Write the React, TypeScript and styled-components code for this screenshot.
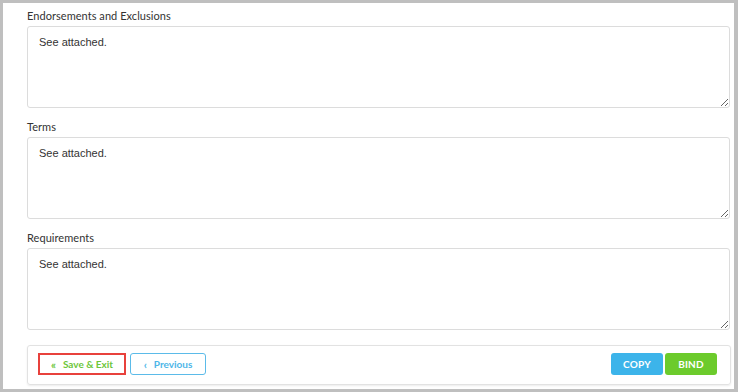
import React from 'react';
import styled, { createGlobalStyle } from 'styled-components';

const GlobalStyle = createGlobalStyle`
  html, body {
    margin: 0;
    padding: 0;
    background: #ffffff;
  }
  * {
    box-sizing: border-box;
  }
`;

type Field = {
  label: string;
  value: string;
};

const fields: Field[] = [
  { label: 'Endorsements and Exclusions', value: 'See attached.' },
  { label: 'Terms', value: 'See attached.' },
  { label: 'Requirements', value: 'See attached.' },
];

export default function App() {
  return (
    <>
      <GlobalStyle />
      <Frame>
        <Body>
          {fields.map((field) => (
            <Group key={field.label}>
              <Label>{field.label}</Label>
              <TextArea defaultValue={field.value} />
            </Group>
          ))}
          <Footer>
            <LeftActions>
              <SaveButton>
                <Chevron>«</Chevron>
                Save &amp; Exit
              </SaveButton>
              <PrevButton>
                <Chevron>‹</Chevron>
                Previous
              </PrevButton>
            </LeftActions>
            <RightActions>
              <SolidButton $color="#3cb4ea">COPY</SolidButton>
              <SolidButton $color="#6ccb2c">BIND</SolidButton>
            </RightActions>
          </Footer>
        </Body>
      </Frame>
    </>
  );
}

const Frame = styled.div`
  width: 738px;
  height: 392px;
  border: 3px solid #bfbfbf;
  border-right-width: 4px;
  background: #ffffff;
`;
const Body = styled.div`
  padding: 6px 1px 4px 24px;
  display: flex;
  flex-direction: column;
`;
const Group = styled.section`
  display: flex;
  flex-direction: column;
  margin-bottom: 12px;
`;
const Label = styled.label`
  font-family: Lato, 'Open Sans', sans-serif;
  font-size: 11px;
  line-height: 14px;
  letter-spacing: 0.05px;
  color: #333333;
  margin-bottom: 3px;
`;
const TextArea = styled.textarea`
  width: 703px;
  height: 82px;
  border: 1px solid #dcdcdc;
  border-radius: 3px;
  padding: 8px 11px;
  font-family: 'Liberation Sans', Arial, sans-serif;
  font-size: 11px;
  line-height: 14px;
  color: #333333;
  outline: none;
  margin: 0;
`;
const Footer = styled.footer`
  width: 704px;
  height: 40px;
  margin-top: 3px;
  border: 1px solid #e2e2e2;
  border-radius: 3px;
  box-shadow: 0 1px 2px rgba(0, 0, 0, 0.08);
  display: flex;
  align-items: center;
  justify-content: space-between;
  padding: 0 13px 2px 10px;
`;
const LeftActions = styled.div`
  display: flex;
  gap: 4px;
`;
const RightActions = styled.div`
  display: flex;
  gap: 2px;
`;
const BaseButton = styled.button`
  height: 22px;
  border-radius: 3px;
  font-family: Lato, 'Open Sans', sans-serif;
  font-weight: 700;
  font-size: 10px;
  display: flex;
  align-items: center;
  justify-content: center;
  padding: 0;
  cursor: pointer;
`;
const SaveButton = styled(BaseButton)`
  width: 88px;
  border: 2px solid #e8413c;
  border-radius: 0;
  background: #ffffff;
  color: #6cc63a;
`;
const PrevButton = styled(BaseButton)`
  width: 76px;
  border: 1px solid #5bbbe9;
  background: #ffffff;
  color: #4db6e8;
`;
const Chevron = styled.span`
  font-size: 11px;
  margin-right: 7px;
`;
const SolidButton = styled(BaseButton)<{ $color: string }>`
  border: none;
  background: ${(p) => p.$color};
  color: #ffffff;
  width: 52px;
  letter-spacing: 0.2px;
`;
